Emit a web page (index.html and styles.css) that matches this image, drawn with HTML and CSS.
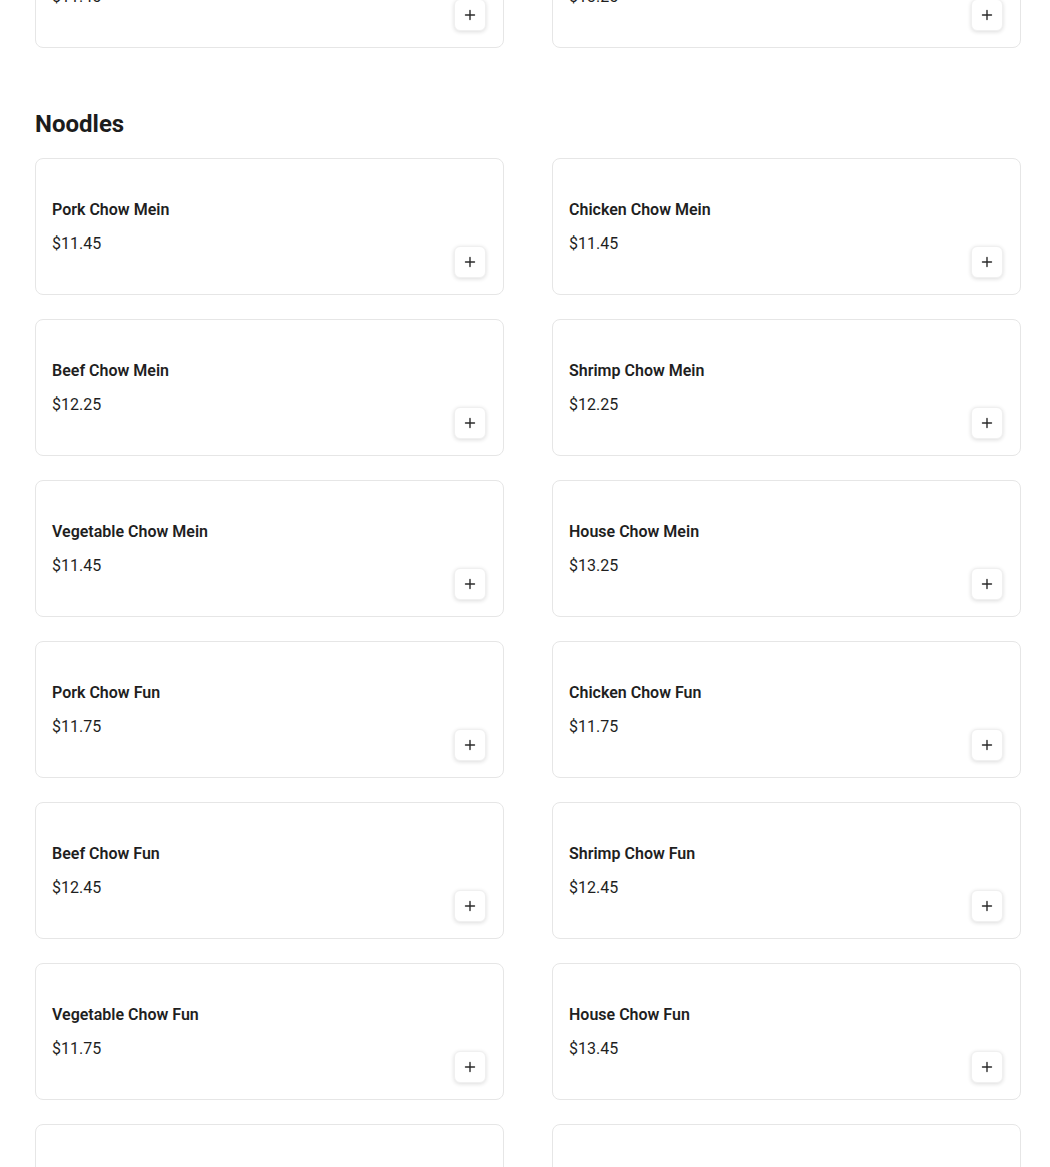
FILE: index.html
```html
<!DOCTYPE html>
<html lang="en">
<head>
<meta charset="utf-8">
<title>Menu</title>
<link rel="stylesheet" href="styles.css">
</head>
<body>
<main class="menu">
  <section class="section section--prev">
    <div class="grid">
      <div class="card">
        <div class="info"><div class="name">House Fried Rice</div><div class="price">$11.45</div></div>
        <button class="add" aria-label="Add"><svg viewBox="0 0 12 12" width="12" height="12"><path d="M6 1.5v9M1.5 6h9" stroke="#2b2b2b" stroke-width="1.4" stroke-linecap="round"/></svg></button>
      </div>
      <div class="card">
        <div class="info"><div class="name">Special Fried Rice</div><div class="price">$13.25</div></div>
        <button class="add" aria-label="Add"><svg viewBox="0 0 12 12" width="12" height="12"><path d="M6 1.5v9M1.5 6h9" stroke="#2b2b2b" stroke-width="1.4" stroke-linecap="round"/></svg></button>
      </div>
    </div>
  </section>

  <section class="section">
    <h2 class="section-title">Noodles</h2>
    <div class="grid">
      <div class="card"><div class="info"><div class="name">Pork Chow Mein</div><div class="price">$11.45</div></div><button class="add" aria-label="Add"><svg viewBox="0 0 12 12" width="12" height="12"><path d="M6 1.5v9M1.5 6h9" stroke="#2b2b2b" stroke-width="1.4" stroke-linecap="round"/></svg></button></div>
      <div class="card"><div class="info"><div class="name">Chicken Chow Mein</div><div class="price">$11.45</div></div><button class="add" aria-label="Add"><svg viewBox="0 0 12 12" width="12" height="12"><path d="M6 1.5v9M1.5 6h9" stroke="#2b2b2b" stroke-width="1.4" stroke-linecap="round"/></svg></button></div>
      <div class="card"><div class="info"><div class="name">Beef Chow Mein</div><div class="price">$12.25</div></div><button class="add" aria-label="Add"><svg viewBox="0 0 12 12" width="12" height="12"><path d="M6 1.5v9M1.5 6h9" stroke="#2b2b2b" stroke-width="1.4" stroke-linecap="round"/></svg></button></div>
      <div class="card"><div class="info"><div class="name">Shrimp Chow Mein</div><div class="price">$12.25</div></div><button class="add" aria-label="Add"><svg viewBox="0 0 12 12" width="12" height="12"><path d="M6 1.5v9M1.5 6h9" stroke="#2b2b2b" stroke-width="1.4" stroke-linecap="round"/></svg></button></div>
      <div class="card"><div class="info"><div class="name">Vegetable Chow Mein</div><div class="price">$11.45</div></div><button class="add" aria-label="Add"><svg viewBox="0 0 12 12" width="12" height="12"><path d="M6 1.5v9M1.5 6h9" stroke="#2b2b2b" stroke-width="1.4" stroke-linecap="round"/></svg></button></div>
      <div class="card"><div class="info"><div class="name">House Chow Mein</div><div class="price">$13.25</div></div><button class="add" aria-label="Add"><svg viewBox="0 0 12 12" width="12" height="12"><path d="M6 1.5v9M1.5 6h9" stroke="#2b2b2b" stroke-width="1.4" stroke-linecap="round"/></svg></button></div>
      <div class="card"><div class="info"><div class="name">Pork Chow Fun</div><div class="price">$11.75</div></div><button class="add" aria-label="Add"><svg viewBox="0 0 12 12" width="12" height="12"><path d="M6 1.5v9M1.5 6h9" stroke="#2b2b2b" stroke-width="1.4" stroke-linecap="round"/></svg></button></div>
      <div class="card"><div class="info"><div class="name">Chicken Chow Fun</div><div class="price">$11.75</div></div><button class="add" aria-label="Add"><svg viewBox="0 0 12 12" width="12" height="12"><path d="M6 1.5v9M1.5 6h9" stroke="#2b2b2b" stroke-width="1.4" stroke-linecap="round"/></svg></button></div>
      <div class="card"><div class="info"><div class="name">Beef Chow Fun</div><div class="price">$12.45</div></div><button class="add" aria-label="Add"><svg viewBox="0 0 12 12" width="12" height="12"><path d="M6 1.5v9M1.5 6h9" stroke="#2b2b2b" stroke-width="1.4" stroke-linecap="round"/></svg></button></div>
      <div class="card"><div class="info"><div class="name">Shrimp Chow Fun</div><div class="price">$12.45</div></div><button class="add" aria-label="Add"><svg viewBox="0 0 12 12" width="12" height="12"><path d="M6 1.5v9M1.5 6h9" stroke="#2b2b2b" stroke-width="1.4" stroke-linecap="round"/></svg></button></div>
      <div class="card"><div class="info"><div class="name">Vegetable Chow Fun</div><div class="price">$11.75</div></div><button class="add" aria-label="Add"><svg viewBox="0 0 12 12" width="12" height="12"><path d="M6 1.5v9M1.5 6h9" stroke="#2b2b2b" stroke-width="1.4" stroke-linecap="round"/></svg></button></div>
      <div class="card"><div class="info"><div class="name">House Chow Fun</div><div class="price">$13.45</div></div><button class="add" aria-label="Add"><svg viewBox="0 0 12 12" width="12" height="12"><path d="M6 1.5v9M1.5 6h9" stroke="#2b2b2b" stroke-width="1.4" stroke-linecap="round"/></svg></button></div>
      <div class="card card--faded"><div class="info"><div class="name">Pork Lo Mein</div><div class="price">$11.45</div></div><button class="add" aria-label="Add"><svg viewBox="0 0 12 12" width="12" height="12"><path d="M6 1.5v9M1.5 6h9" stroke="#2b2b2b" stroke-width="1.4" stroke-linecap="round"/></svg></button></div>
      <div class="card card--faded"><div class="info"><div class="name">Chicken Lo Mein</div><div class="price">$11.45</div></div><button class="add" aria-label="Add"><svg viewBox="0 0 12 12" width="12" height="12"><path d="M6 1.5v9M1.5 6h9" stroke="#2b2b2b" stroke-width="1.4" stroke-linecap="round"/></svg></button></div>
    </div>
  </section>
</main>
</body>
</html>
```

FILE: styles.css
```css
* { box-sizing: border-box; }

html, body {
  margin: 0;
  padding: 0;
  background: #ffffff;
  overflow: hidden;
}

body {
  font-family: Roboto, "Liberation Sans", Arial, sans-serif;
  color: #202020;
}

.menu {
  width: 986px;
  margin: -89px 0 0 35px;
}

.section + .section {
  margin-top: 60px;
}

.section-title {
  margin: 0 0 18px;
  font-size: 24px;
  line-height: 32px;
  font-weight: 700;
  color: #1c1c1c;
}

.grid {
  display: grid;
  grid-template-columns: 469px 469px;
  column-gap: 48px;
  row-gap: 24px;
}

.card {
  display: flex;
  align-items: flex-end;
  height: 137px;
  padding: 16px 17px 16px 16px;
  border: 1px solid #e6e6e6;
  border-radius: 8px;
  background: #fff;
}

.info {
  flex: 1;
  align-self: flex-start;
  padding-top: 24px;
}

.name {
  font-size: 16px;
  line-height: 22px;
  font-weight: 600;
  color: #1f1f1f;
}

.price {
  margin-top: 11px;
  font-size: 16px;
  line-height: 24px;
  color: #1f1f1f;
}

.add {
  flex: none;
  display: flex;
  align-items: center;
  justify-content: center;
  width: 32px;
  height: 32px;
  padding: 0;
  border: 1px solid #f0f0f0;
  border-radius: 6px;
  background: #fff;
  box-shadow: 0 1px 4px rgba(0, 0, 0, 0.14);
  cursor: pointer;
}

.card--faded .name,
.card--faded .price {
  color: #dcdcdc;
}
```
